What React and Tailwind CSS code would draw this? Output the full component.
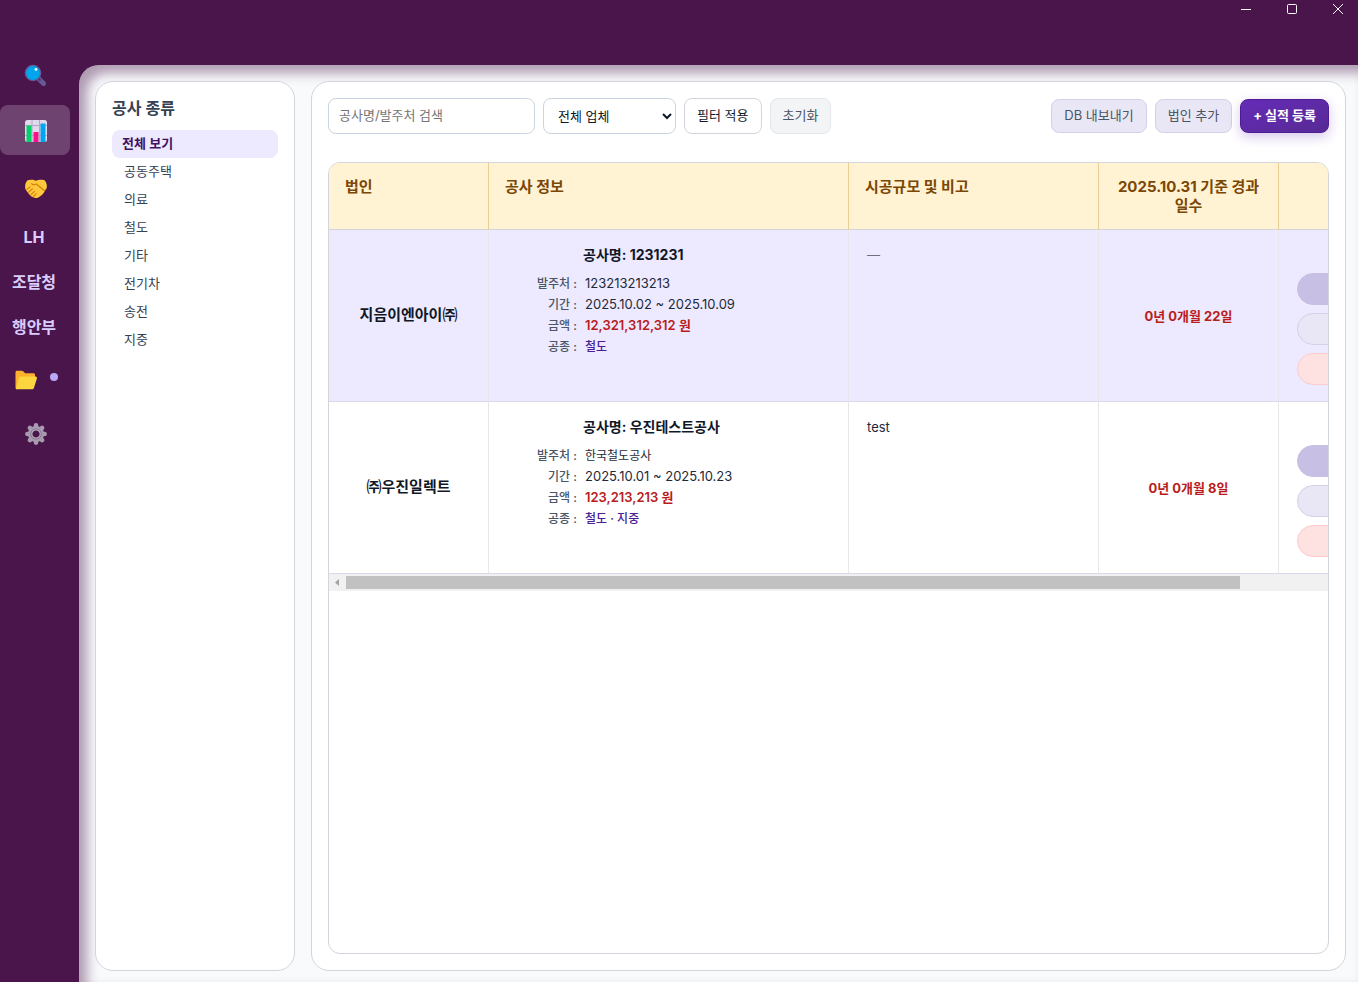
const sans = "font-[Inter,'Noto_Sans_CJK_KR',sans-serif]";

function SearchIcon() {
  return (
    <svg viewBox="0 0 24 24" className="size-6" aria-hidden="true">
      <path d="M15 15l4.6 4.6" stroke="#635994" strokeWidth="5" strokeLinecap="round" />
      <path d="M13.5 13.5l3 3" stroke="#533566" strokeWidth="2" />
      <circle cx="9" cy="9" r="7.6" fill="#00a6ed" stroke="#635994" strokeWidth="1.4" />
      <circle cx="12" cy="5.4" r="1.4" fill="#fff" />
    </svg>
  );
}

function ChartIcon() {
  return (
    <svg viewBox="0 0 24 24" className="size-6" aria-hidden="true">
      <rect x="1" y="1" width="22" height="22" rx="2.5" fill="#e1d8ec" />
      <path d="M8 1v22M15.5 1v22M1 6.5h22M1 16.5h22" stroke="#b4a6c4" strokeWidth="1" />
      <rect x="2.5" y="6.5" width="5" height="16.5" fill="#00d26a" />
      <rect x="9.5" y="13" width="5" height="10" fill="#f8128a" />
      <rect x="16.5" y="4.5" width="5" height="18.5" fill="#00a6ed" />
    </svg>
  );
}

function HandshakeIcon() {
  return (
    <svg viewBox="0 0 24 24" className="size-6" aria-hidden="true">
      <path
        d="M3.2 3.4C5 2.6 8.5 2.6 10.5 3.2L12 3.8C14.5 2.6 19 2.6 20.8 3.4C22.6 5.5 23.4 9 22.6 11.2C22.2 12.4 21 13.2 20.5 14.5C19.6 16.7 17.5 18.6 15.5 19.7C13.6 21.3 10.8 21.4 9 20.3C6.8 19.5 5.2 17.5 3.8 15.5C2.9 14.2 1.6 12.8 1.2 11.2C.8 8.5 1.5 5.3 3.2 3.4Z"
        fill="#ffc83d"
      />
      <path
        d="M7.6 6.6C8.6 8 10.4 7.800 12.200 7L20.600 13.800M3 12.400L6 9.800M4.800 15.200L8.400 11.800M7 17.600L10.600 14.400M9.600 19.400L12.200 16.800"
        fill="none"
        stroke="#d67d00"
        strokeWidth="1.1"
        strokeLinecap="round"
        strokeLinejoin="round"
      />
    </svg>
  );
}

function FolderIcon() {
  return (
    <svg viewBox="0 0 24 24" className="size-6" aria-hidden="true">
      <path d="M1.500 4.200C1.500 3.300 2.200 2.700 3 2.700h4.800c.6 0 1 .2 1.400.6l2 2h8.300c.9 0 1.500.7 1.500 1.500v6L3 21.300c-.9 0-1.500-.7-1.500-1.500Z" fill="#ffb02e" />
      <path d="M6.700 8.600h14.900c1 0 1.600.9 1.300 1.800l-3 9.600c-.3.800-.9 1.300-1.700 1.300H3.400c-1 0-1.600-.9-1.300-1.800l3-9.600c.3-.8.900-1.300 1.600-1.300Z" fill="#fcd53f" />
    </svg>
  );
}

function GearIcon() {
  return (
    <svg viewBox="-12 -12 24 24" className="size-6" aria-hidden="true">
      <g stroke="#a79bb0" strokeWidth="4.6" strokeLinecap="round">
        <path d="M0-8.600V8.600M-8.600 0H8.600M-6.100-6.100L6.100 6.100M-6.100 6.100L6.100-6.100" />
      </g>
      <circle r="8" fill="#a79bb0" />
      <circle r="5.6" fill="#7f6d8c" />
      <circle r="4.2" fill="#4a154b" stroke="#b9afc0" strokeWidth="1.2" />
    </svg>
  );
}

const categories = ["공동주택", "의료", "철도", "기타", "전기차", "송전", "지중"];

const rows = [
  {
    company: "지음이엔아이㈜",
    title: "1231231",
    client: "123213213213",
    clientClass: "text-[13px]",
    period: "2025.10.02 ~ 2025.10.09",
    amount: "12,321,312,312 원",
    kinds: "철도",
    note: "—",
    elapsed: "0년 0개월 22일",
    rowClass: "bg-[#ede9fe]",
    noteClass: "text-gray-500",
  },
  {
    company: "㈜우진일렉트",
    title: "우진테스트공사",
    client: "한국철도공사",
    clientClass: "text-xs leading-[21px]",
    period: "2025.10.01 ~ 2025.10.23",
    amount: "123,213,213 원",
    kinds: "철도 · 지중",
    note: "test",
    elapsed: "0년 0개월 8일",
    rowClass: "bg-white",
    noteClass: "text-gray-800",
  },
];

function Rail() {
  const text = "flex h-[45px] w-full items-center justify-center pt-0.5 pr-0.5 text-base leading-5 font-bold text-[#d9ccff]";
  const icon = "flex h-[50px] w-full items-center justify-center pt-0.5 pl-0.5";
  return (
    <nav aria-label="주 메뉴" className="flex w-[70px] shrink-0 flex-col items-center pt-[50px]">
      <button aria-label="검색" className={icon}>
        <SearchIcon />
      </button>
      <button aria-label="실적" className={`${icon} mt-[5px] rounded-lg bg-white/20`}>
        <ChartIcon />
      </button>
      <button aria-label="협력" className={`${icon} mt-2`}>
        <HandshakeIcon />
      </button>
      <button className={text}>LH</button>
      <button className={text}>조달청</button>
      <button className={text}>행안부</button>
      <button aria-label="폴더" className="mt-1.5 flex h-[50px] w-full items-center gap-3 pt-0.5 pl-3.5">
        <FolderIcon />
        <span className="mb-1.5 size-2 rounded-full bg-[#b9a9f5]" />
      </button>
      <button aria-label="설정" className={`${icon} mt-1`}>
        <GearIcon />
      </button>
    </nav>
  );
}

function TitleBar() {
  const button = "flex h-[18px] w-[46px] items-center justify-center";
  return (
    <header className="-mr-[3px] flex h-[65px] items-start justify-end">
      <button aria-label="최소화" className={button}>
        <svg viewBox="0 0 10 10" className="size-2.5" aria-hidden="true"><path d="M0 5.500h10" stroke="#fff" /></svg>
      </button>
      <button aria-label="최대화" className={button}>
        <svg viewBox="0 0 10 10" className="size-2.5" aria-hidden="true"><rect x=".5" y=".5" width="9" height="9" rx="1" fill="none" stroke="#fff" /></svg>
      </button>
      <button aria-label="닫기" className={button}>
        <svg viewBox="0 0 10 10" className="size-2.5" aria-hidden="true"><path d="M0 0l10 10M10 0L0 10" stroke="#fff" /></svg>
      </button>
    </header>
  );
}

function Detail({ label, value, valueClass }) {
  return (
    <div className="flex gap-2 leading-[21px]">
      <dt className="w-[72px] shrink-0 text-right text-xs leading-[21px] font-medium text-gray-600">{label} :</dt>
      <dd className={valueClass}>{value}</dd>
    </div>
  );
}

function RecordsTable() {
  const th = "border-r border-b border-r-[#e8cd94] border-b-[#d1d5db] px-4 py-3.5 text-left align-top text-[15px] leading-[19px] font-bold text-[#7a4706]";
  const td = "border-r border-b border-r-[#e5e7eb] border-b-[#d9d9ea]";
  const pill = "block h-8 w-full rounded-full border";
  return (
    <div className="min-w-0 flex-1 overflow-hidden rounded-xl border border-gray-300 bg-white">
      <div className="overflow-x-auto [scrollbar-width:none]">
        <table className="w-[1120px] table-fixed border-separate border-spacing-0">
          <colgroup>
            <col className="w-[160px]" />
            <col className="w-[360px]" />
            <col className="w-[250px]" />
            <col className="w-[180px]" />
            <col className="w-[170px]" />
          </colgroup>
          <thead className="bg-[#fff3d3]">
            <tr className="h-[67px]">
              <th className={th}>법인</th>
              <th className={th}>공사 정보</th>
              <th className={th}>시공규모 및 비고</th>
              <th className={th}><span className="block text-center">2025.10.31 기준 경과일수</span></th>
              <th className={th} aria-label="작업" />
            </tr>
          </thead>
          <tbody>
            {rows.map((r) => (
              <tr key={r.company} className={`h-[172px] ${r.rowClass}`}>
                <td className={`${td} px-4 pb-0.5 text-center text-[15px] leading-6 font-bold text-gray-900`}>{r.company}</td>
                <td className={`${td} px-4 py-3.5 align-top text-[13px] text-gray-800`}>
                  <h3 className="mb-2 pl-[78px] text-sm leading-[21px] font-bold text-gray-900">공사명: {r.title}</h3>
                  <dl>
                    <Detail label="발주처" value={r.client} valueClass={r.clientClass} />
                    <Detail label="기간" value={r.period} valueClass="text-[13px]" />
                    <Detail label="금액" value={r.amount} valueClass="text-[13px] font-semibold text-[#b91c1c]" />
                    <Detail label="공종" value={r.kinds} valueClass="text-xs leading-[21px] font-medium text-[#4c1d95]" />
                  </dl>
                </td>
                <td className={`${td} px-[18px] py-[15px] align-top text-[13px] leading-5 ${r.noteClass}`}>{r.note}</td>
                <td className={`${td} px-4 text-center text-[13px] leading-5 font-bold text-[#b91c1c]`}>{r.elapsed}</td>
                <td className={`${td} px-[18px] pt-[27px]`}>
                  <div className="flex flex-col gap-2">
                    <button aria-label="복사" className={`${pill} border-[#c7c0e4] bg-[#c7c0e4]`} />
                    <button aria-label="수정" className={`${pill} border-[#d5d0ea] bg-[#e9e7f5]`} />
                    <button aria-label="삭제" className={`${pill} border-[#fecaca] bg-[#fee2e2]`} />
                  </div>
                </td>
              </tr>
            ))}
          </tbody>
        </table>
      </div>
      <div className="flex h-[17px] items-center bg-[#f1f1f1]" aria-hidden="true">
        <svg viewBox="0 0 17 17" className="size-[17px] shrink-0"><path d="M10 5v7L6 8.500Z" fill="#a3a3a3" /></svg>
        <div className="mr-[88px] h-[13px] flex-1 bg-[#c1c1c1]" />
      </div>
    </div>
  );
}

export default function App() {
  const soft = "h-[34px] rounded-lg border border-[#d5d0ea] bg-[#e9e7f5] px-3 text-[13px] text-gray-600";
  return (
    <div className={`flex min-h-screen flex-col overflow-hidden bg-[#4a154b] ${sans}`}>
      <div className="flex flex-1">
        <Rail />
        <div className="flex min-w-0 flex-1 flex-col pl-[9px]">
          <TitleBar />
          <main className="flex flex-1 gap-4 rounded-tl-[20px] bg-[#f8fafc] pt-4 pr-3 pb-[11px] pl-4 shadow-[inset_8px_8px_12px_rgba(74,21,75,0.42)]">
            <aside className="w-[200px] shrink-0 rounded-[18px] border border-gray-300 bg-white p-4">
              <h2 className="text-base leading-5 font-semibold text-gray-700">공사 종류</h2>
              <ul className="mt-3 text-[13px] leading-5">
                <li>
                  <button className="h-7 w-full rounded-lg bg-[#ede9fe] px-2.5 pb-0.5 text-left font-semibold text-[#3f1263]">전체 보기</button>
                </li>
                {categories.map((c) => (
                  <li key={c}>
                    <button className="h-7 w-full px-3 pb-0.5 text-left text-gray-700">{c}</button>
                  </li>
                ))}
              </ul>
            </aside>
            <section className="flex min-w-0 flex-1 flex-col rounded-[18px] border border-gray-300 bg-white p-4">
              <div className="mb-7 flex items-start gap-2">
                <input
                  type="text"
                  aria-label="공사명/발주처 검색"
                  placeholder="공사명/발주처 검색"
                  className="h-9 w-[207px] rounded-lg border border-slate-300 px-2.5 pb-0.5 text-[13px] placeholder:text-[#757575]"
                />
                <select aria-label="업체" className="h-9 w-[133px] rounded-lg border border-slate-300 bg-white px-2.5 text-[13px] text-gray-900">
                  <option>전체 업체</option>
                </select>
                <button className="h-9 rounded-lg border border-gray-300 bg-white px-3 text-[13px] text-gray-900">필터 적용</button>
                <button className="h-9 rounded-lg border border-gray-200 bg-gray-100 px-3 text-[13px] text-gray-600">초기화</button>
                <div className="mt-px ml-auto flex gap-2">
                  <button className={soft}>DB 내보내기</button>
                  <button className={soft}>법인 추가</button>
                  <button className="h-[34px] rounded-lg border border-[#4c1d95] bg-gradient-to-br from-[#652bb8] to-[#572a94] px-3 text-[13px] font-bold text-white shadow-[0_4px_12px_rgba(91,33,182,0.25)]">
                    + 실적 등록
                  </button>
                </div>
              </div>
              <RecordsTable />
            </section>
          </main>
        </div>
      </div>
    </div>
  );
}
